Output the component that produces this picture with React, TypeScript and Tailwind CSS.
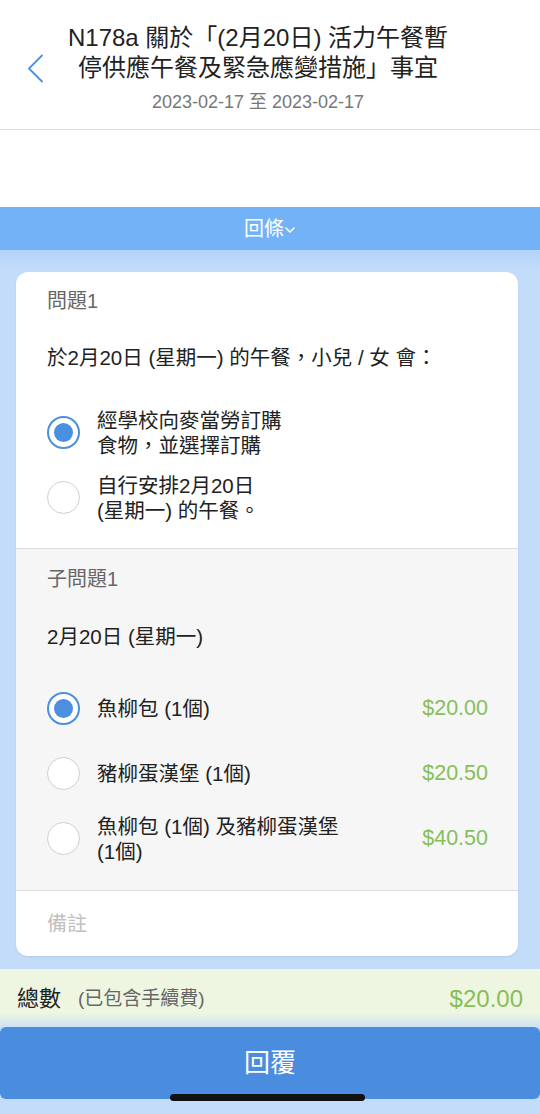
import React from "react";

const FONT = { fontFamily: '"Liberation Sans", "Noto Sans CJK TC", sans-serif' };

function Radio({ checked }: { checked: boolean }) {
  return checked ? (
    <div className="w-[33px] h-[33px] shrink-0 rounded-full border-2 border-[#4a8fe0] flex items-center justify-center bg-white">
      <div className="w-[19px] h-[19px] rounded-full bg-[#4a8fe0]" />
    </div>
  ) : (
    <div className="w-[33px] h-[33px] shrink-0 rounded-full border-[1.5px] border-[#cfcfcf] bg-white" />
  );
}

function Option({
  checked,
  lines,
  price,
}: {
  checked: boolean;
  lines: string[];
  price?: string;
}) {
  return (
    <div className="h-[65px] flex items-center">
      <Radio checked={checked} />
      <div className="ml-[17px] flex-1 text-[20.5px] leading-[25px] text-[#222]">
        {lines.map((l, i) => (
          <div key={i}>{l}</div>
        ))}
      </div>
      {price && <div className="text-[21.5px] text-[#86bf58]">{price}</div>}
    </div>
  );
}

export default function App() {
  return (
    <div className="relative w-[540px] h-[1114px] bg-[#c3dcfa] flex flex-col overflow-hidden" style={FONT}>
      {/* Header */}
      <div className="bg-white h-[207px] flex flex-col">
        <div className="relative h-[130px] border-b border-[#dcdcdc] flex">
          <svg className="absolute left-[27px] top-[54px]" width="17" height="29" viewBox="0 0 17 29" fill="none">
            <path d="M15 1.5 L2 14.5 L15 27.5" stroke="#4a8fe0" strokeWidth="1.8" strokeLinecap="round" strokeLinejoin="round" />
          </svg>
          <div className="ml-[50px] mr-[74px] flex-1 flex flex-col items-center pt-[23px]">
            <div className="text-[24px] leading-[30px] text-[#222] text-center whitespace-nowrap">
              N178a 關於「(2月20日) 活力午餐暫
              <br />
              停供應午餐及緊急應變措施」事宜
            </div>
            <div className="mt-[8px] text-[18px] leading-[22px] text-[#777]">2023-02-17 至 2023-02-17</div>
          </div>
        </div>
      </div>

      {/* Reply bar */}
      <div className="h-[43px] bg-[#74b2f8] flex items-center justify-center text-white text-[20px]">
        <span>回條</span>
        <svg width="12" height="12" viewBox="0 0 12 12" fill="none" className="mt-[2px]">
          <path d="M2 4 L6 8 L10 4" stroke="white" strokeWidth="1.5" strokeLinecap="round" strokeLinejoin="round" />
        </svg>
      </div>
      <div className="h-[22px] bg-[linear-gradient(to_bottom,#b4d3fa,#c3dcfa)]" />

      {/* Card */}
      <div className="ml-[16px] mr-[22px] bg-white rounded-[12px] overflow-hidden shadow-[0_1px_2px_rgba(0,0,0,0.08)]">
        <div className="px-[31px]">
          <div className="h-[58px] flex items-center text-[20px] text-[#666]">問題1</div>
          <div className="h-[56px] flex items-center text-[20.5px] text-[#222] whitespace-nowrap">於2月20日 (星期一) 的午餐，小兒 / 女 會：</div>
          <div className="pt-[14px] pb-[18px]">
            <Option checked lines={["經學校向麥當勞訂購", "食物，並選擇訂購"]} />
            <Option checked={false} lines={["自行安排2月20日", "(星期一) 的午餐。"]} />
          </div>
        </div>
        <div className="border-t border-[#dedede] bg-[#f6f6f6] pl-[31px] pr-[30px]">
          <div className="h-[60px] flex items-center text-[20px] text-[#666]">子問題1</div>
          <div className="h-[56px] flex items-center text-[20.5px] text-[#222]">2月20日 (星期一)</div>
          <div className="pt-[11px] pb-[19px]">
            <Option checked lines={["魚柳包 (1個)"]} price="$20.00" />
            <Option checked={false} lines={["豬柳蛋漢堡 (1個)"]} price="$20.50" />
            <Option checked={false} lines={["魚柳包 (1個) 及豬柳蛋漢堡", "(1個)"]} price="$40.50" />
          </div>
        </div>
        <div className="border-t border-[#dedede] h-[66px] flex items-center px-[31px] text-[20px] text-[#c0c0c0]">備註</div>
      </div>

      {/* Total */}
      <div className="mt-[13px] h-[58px] bg-[linear-gradient(to_bottom,#eef6e2_75%,#cde2f4)] flex items-start pt-[15px] px-[17px]">
        <span className="text-[22px] leading-[30px] text-[#222]">總數</span>
        <span className="ml-[17px] text-[19px] leading-[30px] text-[#666]">(已包含手續費)</span>
        <span className="ml-auto text-[24px] leading-[30px] text-[#86bf58]">$20.00</span>
      </div>

      {/* Button */}
      <div className="h-[72px] bg-[#4a8ddf] rounded-[6px] flex items-center justify-center text-white text-[26px]">回覆</div>

      {/* Home indicator */}
      <div className="absolute left-[170px] top-[1094px] w-[195px] h-[7px] rounded-full bg-[#111]" />
    </div>
  );
}
